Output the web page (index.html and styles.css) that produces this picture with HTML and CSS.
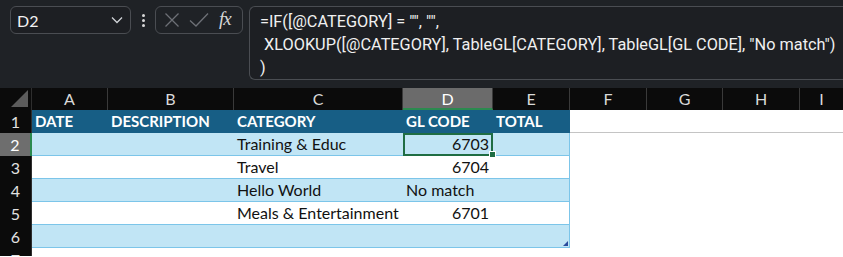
FILE: index.html
```html
<!DOCTYPE html>
<html>
<head>
<meta charset="utf-8">
<link rel="stylesheet" href="styles.css">
</head>
<body>
<div class="app">
  <div class="toolbar">
    <div class="namebox">
      <span class="name">D2</span>
      <svg class="chev" width="12" height="8" viewBox="0 0 12 8"><path d="M1 1.5 L6 6.5 L11 1.5" fill="none" stroke="#cfd2d6" stroke-width="1.3"/></svg>
    </div>
    <div class="dots"><span></span><span></span><span></span></div>
    <div class="fxbox">
      <svg class="ico" width="16" height="16" viewBox="0 0 16 16"><path d="M1.5 1.5 L14.5 14.5 M14.5 1.5 L1.5 14.5" stroke="#6d7076" stroke-width="1.3" fill="none"/></svg>
      <svg class="ico" width="20" height="16" viewBox="0 0 20 16"><path d="M1 8.5 L7 14 L19 1.5" stroke="#6d7076" stroke-width="1.3" fill="none"/></svg>
      <span class="fx">fx</span>
    </div>
    <div class="formula">
      <div class="fline">=IF([@CATEGORY] = "", "",</div>
      <div class="fline">&nbsp;XLOOKUP([@CATEGORY], TableGL[CATEGORY], TableGL[GL CODE], "No match")</div>
      <div class="fline">)</div>
    </div>
  </div>
  <div class="sheet">
    <div class="corner"></div>
    <div class="ch">A</div><div class="ch">B</div><div class="ch">C</div><div class="ch selh">D</div><div class="ch">E</div><div class="ch">F</div><div class="ch">G</div><div class="ch">H</div><div class="ch last">I</div>

    <div class="rh">1</div>
    <div class="c hd">DATE</div><div class="c hd">DESCRIPTION</div><div class="c hd">CATEGORY</div><div class="c hd">GL CODE</div><div class="c hd">TOTAL</div>
    <div class="c o o1"></div><div class="c o o1"></div><div class="c o o1"></div><div class="c o o1"></div>

    <div class="rh selr">2</div>
    <div class="c b"></div><div class="c b"></div><div class="c b">Training &amp; Educ</div><div class="c b num sel">6703</div><div class="c b e"></div>
    <div class="c o"></div><div class="c o"></div><div class="c o"></div><div class="c o"></div>

    <div class="rh">3</div>
    <div class="c w"></div><div class="c w"></div><div class="c w">Travel</div><div class="c w num">6704</div><div class="c w e"></div>
    <div class="c o"></div><div class="c o"></div><div class="c o"></div><div class="c o"></div>

    <div class="rh">4</div>
    <div class="c b"></div><div class="c b"></div><div class="c b">Hello World</div><div class="c b">No match</div><div class="c b e"></div>
    <div class="c o"></div><div class="c o"></div><div class="c o"></div><div class="c o"></div>

    <div class="rh">5</div>
    <div class="c w"></div><div class="c w"></div><div class="c w">Meals &amp; Entertainment</div><div class="c w num">6701</div><div class="c w e"></div>
    <div class="c o"></div><div class="c o"></div><div class="c o"></div><div class="c o"></div>

    <div class="rh">6</div>
    <div class="c b"></div><div class="c b"></div><div class="c b"></div><div class="c b"></div><div class="c b e grip"></div>
    <div class="c o"></div><div class="c o"></div><div class="c o"></div><div class="c o"></div>

    <div class="rh rlast">7</div>
    <div class="c o"></div><div class="c o"></div><div class="c o"></div><div class="c o"></div><div class="c o"></div>
    <div class="c o"></div><div class="c o"></div><div class="c o"></div><div class="c o"></div>
  </div>
</div>
</body>
</html>
```
FILE: styles.css
```css
* { box-sizing: border-box; }
html, body { margin: 0; padding: 0; }
body { width: 843px; height: 257px; overflow: hidden; background: #ffffff; font-family: Lato, "Noto Sans", sans-serif; }

.app { display: flex; flex-direction: column; }

.toolbar {
  height: 88px;
  background: #1f2226;
  display: flex;
  align-items: flex-start;
  padding: 6px 0 0 10px;
  overflow: hidden;
}
.namebox {
  width: 121px; height: 28px;
  border: 1px solid #4a4d52; border-radius: 6px;
  background: #1d1f23;
  display: flex; align-items: center; justify-content: space-between;
  padding: 0 7px 0 6px;
  flex: none;
}
.name { color: #f2f2f2; font-size: 16px; font-family: Lato, sans-serif; }
.dots { width: 24px; height: 28px; display: flex; flex-direction: column; align-items: center; justify-content: center; gap: 2px; flex: none; }
.dots span { width: 3px; height: 3px; background: #d8d8d8; border-radius: 50%; }
.fxbox {
  width: 88px; height: 28px; flex: none;
  border: 1px solid #4a4d52; border-radius: 6px;
  display: flex; align-items: center;
  padding: 0 0 0 8px; gap: 9px;
}
.fx { color: #d6d6d6; font-family: "Liberation Serif", serif; font-style: italic; font-size: 19px; margin-left: 1px; letter-spacing: -1px; line-height: 1; padding-bottom: 3px; }
.formula {
  margin-left: 6px;
  width: 620px; height: 74px; flex: none;
  border: 1px solid #4a4d52; border-radius: 6px 0 0 6px;
  border-right: none;
  background: #1d1f23;
  padding: 3px 0 0 10px;
  color: #f0f0f0;
  font-family: "Liberation Sans Narrow", "Roboto", sans-serif;
  font-size: 16.3px;
}
.fline { height: 23px; line-height: 23px; white-space: pre; }

.sheet {
  display: grid;
  grid-template-columns: 32px 76px 126px 169px 90px 77px 77px 76px 77px 43px;
  grid-template-rows: 22px repeat(6, 23px) 8px;
  font-size: 16px;
  overflow: hidden;
}
.corner { background: #0b0b0b; position: relative; border-right: 1px solid #2e2e2e; }
.corner::after {
  content: ""; position: absolute; right: 3px; bottom: 3px; width: 17px; height: 17px;
  background: #5c5c5c; clip-path: polygon(100% 0, 100% 100%, 0 100%);
}
.ch {
  background: #0b0b0b; color: #d9d9d9;
  border-right: 1px solid #3a3a3a;
  text-align: center; line-height: 22px;
}
.ch.last { border-right: none; }
.ch.selh { background: #6b6b6b; color: #ffffff; border-bottom: 2px solid #2b8a4f; line-height: 21px; }
.rh { background: #0b0b0b; color: #e2e2e2; text-align: center; line-height: 23px; border-right: 1px solid #2e2e2e; }
.rh.rlast { overflow: hidden; }
.rh.selr { background: #6e6e6e; color: #ffffff; border-right: 2px solid #2b8a4f; }

.c { padding: 0 3px; line-height: 22px; white-space: nowrap; overflow: visible; color: #111; }
.hd { background: #175e85; color: #ffffff; font-weight: 700; font-size: 15px; line-height: 23px; }
.b { background: #c1e5f5; border-bottom: 1px solid #7cc5e9; }
.w { background: #ffffff; border-bottom: 1px solid #7cc5e9; }
.e { border-right: 1px solid #7cc5e9; }
.num { text-align: right; padding-right: 4px; }
.o { background: #ffffff; }
.o1 { border-bottom: 1px solid #c4c4c4; }
.sel { position: relative; outline: 2px solid #1f6d43; outline-offset: -2px; }
.sel::after { content: ""; position: absolute; right: -3px; bottom: -3px; width: 5px; height: 5px; background: #1f6d43; border: 1px solid #ffffff; }
.grip { position: relative; }
.grip::after {
  content: ""; position: absolute; right: 1px; bottom: 1px; width: 5px; height: 5px;
  background: #2a4b9c; clip-path: polygon(100% 0, 100% 100%, 0 100%);
}
```
